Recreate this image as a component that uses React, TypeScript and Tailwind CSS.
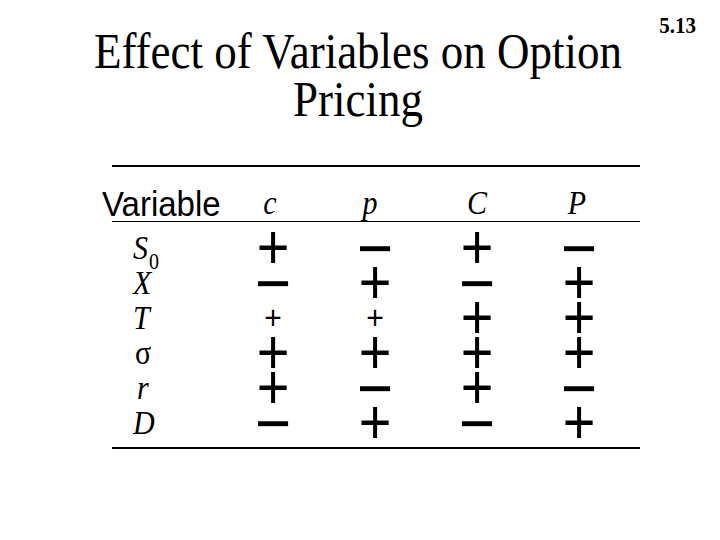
const serif = "font-['Liberation_Serif','Times_New_Roman',serif]";
const sans = "font-['Liberation_Sans',Arial,sans-serif]";
const tall = "scale-y-[1.12]";

type Sign = "+" | "-" | "s";

const rows: { label: React.ReactNode; signs: Sign[] }[] = [
  {
    label: (
      <>
        <span className="italic">S</span>
        <span className="text-[20px] not-italic relative top-[9px] ml-[1px]">0</span>
      </>
    ),
    signs: ["+", "-", "+", "-"],
  },
  { label: <span className="italic">X</span>, signs: ["-", "+", "-", "+"] },
  { label: <span className="italic">T</span>, signs: ["s", "s", "+", "+"] },
  { label: <span className="ml-[2px]">σ</span>, signs: ["+", "+", "+", "+"] },
  { label: <span className="italic ml-[4px]">r</span>, signs: ["+", "-", "+", "-"] },
  { label: <span className="italic">D</span>, signs: ["-", "+", "-", "+"] },
];

const SignCell = ({ sign }: { sign: Sign }) => {
  if (sign === "+")
    return <div className={`${sans} ${tall} text-center text-[56px] leading-[35px] h-[35px]`}>+</div>;
  if (sign === "s")
    return <div className={`${sans} ${tall} text-center text-[30px] leading-[35px] h-[35px]`}>+</div>;
  return <div className={`${sans} ${tall} text-center text-[62px] leading-[35px] h-[35px]`}>−</div>;
};

const App = () => {
  return (
    <div className="relative w-[720px] h-[540px] bg-white text-black overflow-hidden">
      {/* slide number */}
      <div className={`${serif} ${tall} absolute top-[13px] right-[24px] text-[21px] font-bold leading-[24px]`}>5.13</div>

      <h1 className={`${serif} w-[716px] pt-[29px] text-center text-[45px] leading-[48px]`}>
        <div className={`${tall} origin-[50%_75%]`}>Effect of Variables on Option</div>
        <div className={`${tall} origin-[50%_75%]`}>Pricing</div>
      </h1>

      <div className="ml-[112px] mt-[40px] w-[528px] border-t-2 border-b-2 border-black">
        {/* header */}
        <div className="grid grid-cols-[110px_repeat(4,102px)] h-[55px] items-end pb-[1px] border-b border-black">
          <div className={`${sans} scale-y-[1.08] origin-bottom -ml-[10px] text-[33px] leading-[31px] whitespace-nowrap`}>Variable</div>
          <div className={`${serif} ${tall} origin-bottom italic text-center text-[30px] leading-[31px] -translate-x-[3px]`}>c</div>
          <div className={`${serif} ${tall} origin-bottom italic text-center text-[30px] leading-[31px] -translate-x-[5px]`}>p</div>
          <div className={`${serif} ${tall} origin-bottom italic text-center text-[30px] leading-[31px]`}>C</div>
          <div className={`${serif} ${tall} origin-bottom italic text-center text-[30px] leading-[31px] -translate-x-[2px]`}>P</div>
        </div>

        {/* rows */}
        <div className="pt-[8px] pb-[7px]">
          {rows.map((row, i) => (
            <div key={i} className="grid grid-cols-[110px_repeat(4,102px)] h-[35px]">
              <div className={`${serif} ${tall} pl-[21px] text-[30px] leading-[35px] h-[35px] whitespace-nowrap`}>
                {row.label}
              </div>
              {row.signs.map((s, j) => (
                <SignCell key={j} sign={s} />
              ))}
            </div>
          ))}
        </div>
      </div>
    </div>
  );
};

export default App;
